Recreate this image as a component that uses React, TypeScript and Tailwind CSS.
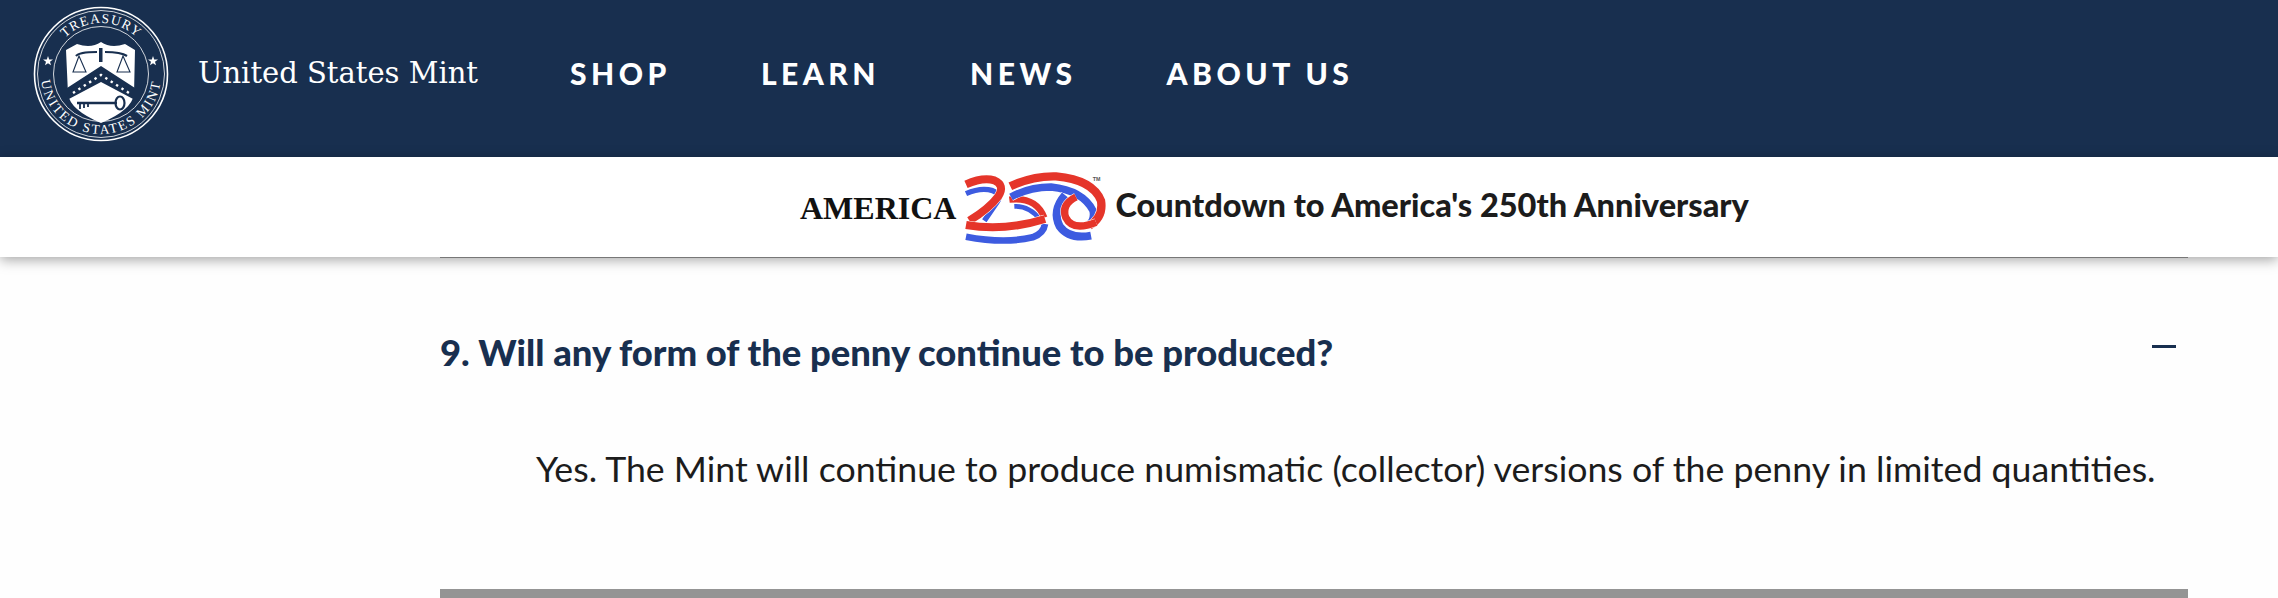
const navItems = ['SHOP', 'LEARN', 'NEWS', 'ABOUT US'];

function Seal() {
  return (
    <svg viewBox="0 0 136 136" className="h-[136px] w-[136px] shrink-0">
      <defs>
        <path id="sealTop" d="M20 68 A48 48 0 0 1 116 68" />
        <path id="sealBottom" d="M8 68 A60 60 0 0 0 128 68" />
      </defs>
      <circle cx="68" cy="68" r="66.5" fill="none" stroke="#fff" strokeWidth="1.6" />
      <circle cx="68" cy="68" r="63.5" fill="none" stroke="#fff" strokeWidth="0.8" />
      <circle cx="68" cy="68" r="47.5" fill="none" stroke="#fff" strokeWidth="0.8" />
      <text fill="#fff" fontSize="13.5" fontFamily="Liberation Serif, serif" letterSpacing="0.6">
        <textPath href="#sealTop" startOffset="50%" textAnchor="middle">
          <tspan dy="-3">TREASURY</tspan>
        </textPath>
      </text>
      <text fill="#fff" fontSize="13.5" fontFamily="Liberation Serif, serif" letterSpacing="2">
        <textPath href="#sealBottom" startOffset="50%" textAnchor="middle">
          UNITED STATES MINT
        </textPath>
      </text>
      <polygon points="15,50 16.2,53.5 20,53.5 17,55.8 18,59.2 15,57.2 12,59.2 13,55.8 10,53.5 13.8,53.5" fill="#fff" />
      <polygon points="120,50 121.2,53.5 125,53.5 122,55.8 123,59.2 120,57.2 117,59.2 118,55.8 115,53.5 118.8,53.5" fill="#fff" />
      <path d="M33 44 L44 38 Q58 43 68 36 Q78 43 92 38 L102 44 L101 88 Q99 104 68 117 Q37 104 35 88 Z" fill="#fff" />
      <path d="M43 50 Q46 46 64 46 M72 46 Q88 46 94 50" stroke="#182f4f" strokeWidth="2.2" fill="none" />
      <rect x="66" y="42" width="3.5" height="14" fill="#182f4f" />
      <path d="M46 50 L40 66 H53 Z M90 50 L84 66 H97 Z" stroke="#182f4f" strokeWidth="1.1" fill="#fff" />
      <path d="M34 82 L68 60 L102 82 V94 L68 76 L34 94 Z" fill="#182f4f" />
      <path d="M40 87 L68 69 L96 87" stroke="#fff" strokeWidth="2.4" strokeDasharray="2.4 4" fill="none" />
      <path d="M44 97 H84" stroke="#182f4f" strokeWidth="2.4" />
      <path d="M47 97 V103 M51 97 V102 M55 97 V101" stroke="#182f4f" strokeWidth="1.8" />
      <ellipse cx="87" cy="97" rx="4.5" ry="6.5" stroke="#182f4f" strokeWidth="2.2" fill="none" />
    </svg>
  );
}

const RED = '#e5352a';
const BLUE = '#3d5be0';

// one ribbon, with a white edge so it reads as woven over what is below
function Band({ d, color, w }: { d: string; color: string; w: number }) {
  return (
    <>
      <path d={d} stroke="#fff" strokeWidth={w + 3} />
      <path d={d} stroke={color} strokeWidth={w} />
    </>
  );
}

function America250() {
  // coords taken from the reference ribbons, 3x scale
  return (
    <svg viewBox="0 0 450 234" className="h-[78px] w-[150px] shrink-0">
      <g fill="none">
        <Band d="M160 112 Q205 110 238 152" color={BLUE} w={14} />
        <Band d="M145 92 Q225 82 250 146" color={RED} w={19} />
        <Band d="M150 84 Q205 54 270 54 Q365 64 396 125 Q402 155 380 170" color={BLUE} w={22} />
        <Band d="M148 52 Q215 20 285 22 Q395 32 420 95 Q428 145 385 170" color={RED} w={25} />
        <Band d="M312 78 Q272 125 296 172 Q325 212 390 200" color={BLUE} w={24} />
        <Band d="M345 84 Q300 107 314 145 Q335 188 405 160" color={RED} w={22} />
        <Band d="M15 74 Q60 54 95 65 Q125 76 108 100 L70 155" color={BLUE} w={16} />
        <Band d="M15 46 Q65 24 100 34 Q133 48 112 82 Q85 118 25 155" color={RED} w={24} />
        <Band d="M15 203 Q130 225 215 205 Q248 193 252 165" color={BLUE} w={20} />
        <Band d="M15 168 Q130 188 252 150" color={RED} w={24} />
      </g>
      <text x="395" y="36" fontSize="16" fontWeight="700" fill="#555" fontFamily="Liberation Sans, sans-serif">TM</text>
    </svg>
  );
}

export default function App() {
  return (
    <div className="flex h-[598px] w-full flex-col overflow-hidden bg-[#fefefe] font-['Lato',sans-serif]">
      <header className="flex h-[157px] shrink-0 items-center bg-[#182f4f] pb-[10px] pl-[33px]">
        <Seal />
        <a className="ml-[29px] font-['DejaVu_Serif',serif] text-[29px] text-white">United States Mint</a>
        <nav className="ml-[92px] flex gap-[90px]">
          {navItems.map((item) => (
            <a key={item} className="text-[30px] font-black tracking-[4.5px] text-white">
              {item}
            </a>
          ))}
        </nav>
      </header>

      <div className="flex h-[100px] shrink-0 items-center bg-white pb-[4px] pl-[800px] shadow-[0_3px_12px_rgba(0,0,0,0.35)]">
        <span className="mt-[6px] font-['Liberation_Serif',serif] text-[32px] font-bold text-[#111]">AMERICA</span>
        <div className="ml-[5px] mt-[5px]">
          <America250 />
        </div>
        <span className="ml-[4px] text-[32.5px] font-black text-[#1c1c1c]">Countdown to America's 250th Anniversary</span>
      </div>

      <main className="relative ml-[440px] mr-[90px] flex flex-1 flex-col">
        <div className="h-px bg-[#777]" />
        <div className="mt-[69px] flex items-start justify-between">
          <h3 className="text-[36.4px] font-black leading-[50px] text-[#182f4f]">9. Will any form of the penny continue to be produced?</h3>
          <span className="mr-[12px] mt-[18px] h-[3px] w-[24px] bg-[#182f4f]" />
        </div>
        <p className="ml-[96px] mt-[67px] text-[35.7px] leading-[50px] text-[#1c1c1c]">
          Yes. The Mint will continue to produce numismatic (collector) versions of the penny in limited quantities.
        </p>
        <div className="mt-auto h-[9px] bg-[#949494]" />
      </main>
    </div>
  );
}
